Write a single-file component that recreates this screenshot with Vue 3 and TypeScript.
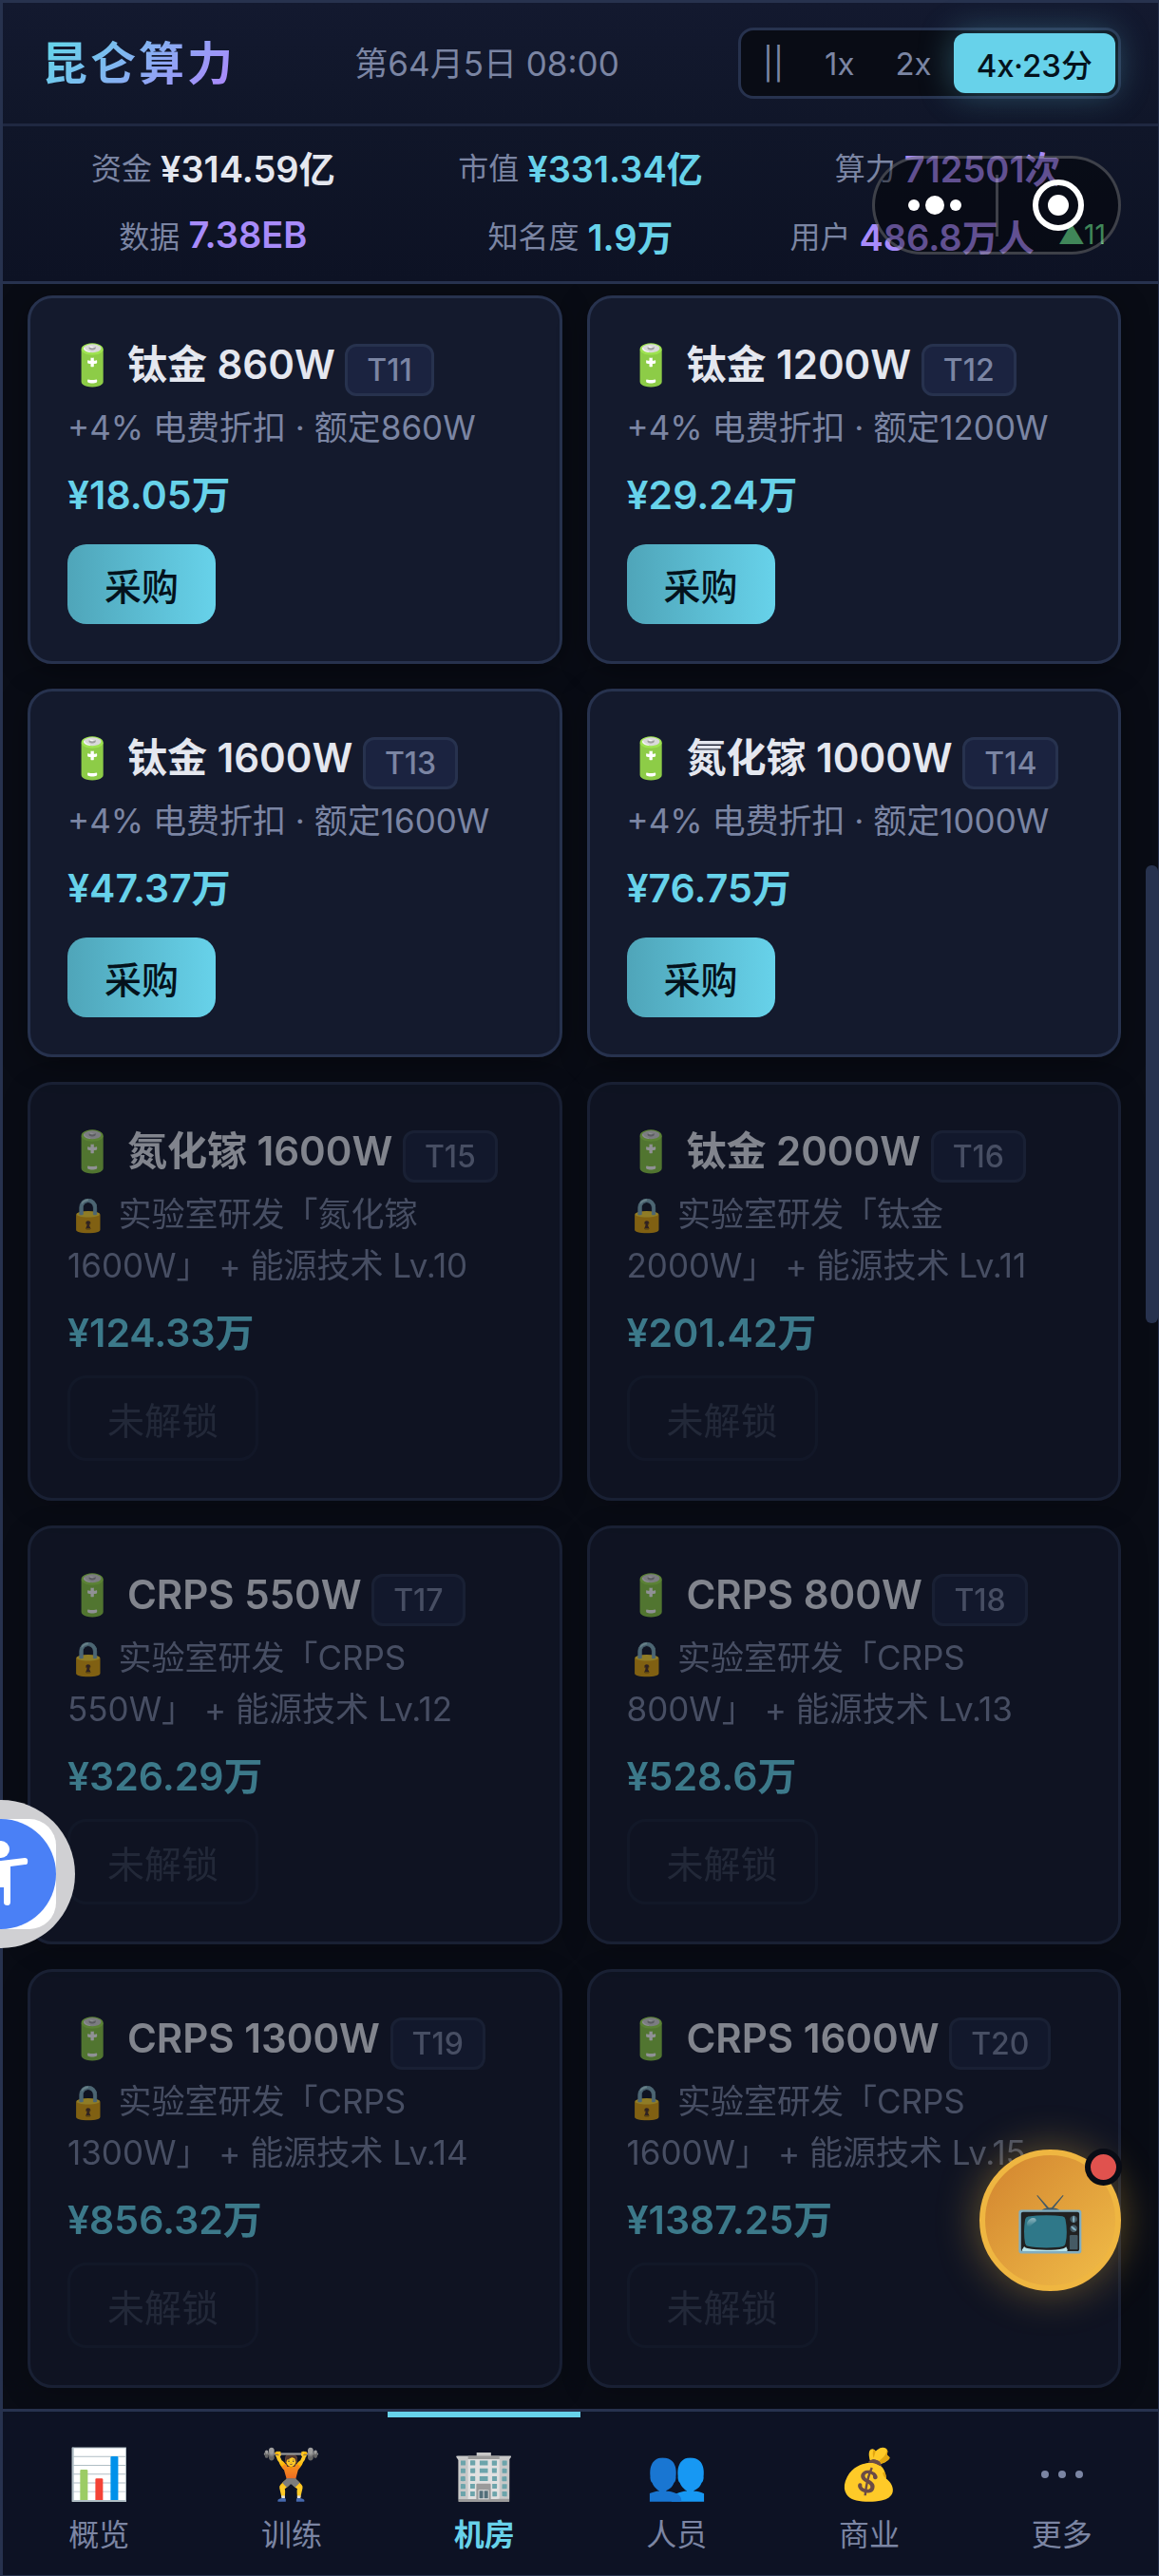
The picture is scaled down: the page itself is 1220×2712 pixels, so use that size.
<script setup lang="ts">
import { ref } from 'vue'

interface Psu {
  name: string
  tier: string
  note: string
  price: string
  locked: boolean
}

interface Stat {
  label: string
  value: string
  tone: 'plain' | 'cyan' | 'violet'
  delta?: string
}

const speeds = ['||', '1x', '2x', '4x·23分']
const speed = ref('4x·23分')

const stats: Stat[] = [
  { label: '资金', value: '¥314.59亿', tone: 'plain' },
  { label: '市值', value: '¥331.34亿', tone: 'cyan' },
  { label: '算力', value: '712501次', tone: 'violet' },
  { label: '数据', value: '7.38EB', tone: 'violet' },
  { label: '知名度', value: '1.9万', tone: 'cyan' },
  { label: '用户', value: '486.8万人', tone: 'violet', delta: '▲11' },
]

const open = (name: string, tier: string, watt: string, price: string): Psu => ({
  name: `${name} ${watt}`,
  tier,
  note: `+4% 电费折扣 · 额定${watt}`,
  price,
  locked: false,
})

const locked = (name: string, tier: string, watt: string, price: string, level: number): Psu => ({
  name: `${name} ${watt}`,
  tier,
  note: `🔒 实验室研发「${name} ${watt}」 + 能源技术 Lv.${level}`,
  price,
  locked: true,
})

const items: Psu[] = [
  open('钛金', 'T11', '860W', '¥18.05万'),
  open('钛金', 'T12', '1200W', '¥29.24万'),
  open('钛金', 'T13', '1600W', '¥47.37万'),
  open('氮化镓', 'T14', '1000W', '¥76.75万'),
  locked('氮化镓', 'T15', '1600W', '¥124.33万', 10),
  locked('钛金', 'T16', '2000W', '¥201.42万', 11),
  locked('CRPS', 'T17', '550W', '¥326.29万', 12),
  locked('CRPS', 'T18', '800W', '¥528.6万', 13),
  locked('CRPS', 'T19', '1300W', '¥856.32万', 14),
  locked('CRPS', 'T20', '1600W', '¥1387.25万', 15),
]

const tabs = [
  { icon: '📊', label: '概览' },
  { icon: '🏋️', label: '训练' },
  { icon: '🏢', label: '机房' },
  { icon: '👥', label: '人员' },
  { icon: '💰', label: '商业' },
  { icon: '', label: '更多' },
]
const tab = ref('机房')
</script>

<template>
  <div class="app">
    <header class="topbar">
      <h1 class="brand">昆仑算力</h1>
      <time class="clock">第64月5日 08:00</time>
      <div class="speeds">
        <button
          v-for="s in speeds"
          :key="s"
          type="button"
          class="speed"
          :class="{ active: s === speed }"
          @click="speed = s"
        >{{ s }}</button>
      </div>
    </header>

    <section class="stats">
      <div v-for="s in stats" :key="s.label" class="stat">
        <span class="stat-label">{{ s.label }}</span>
        <span class="stat-value" :class="s.tone">{{ s.value }}</span>
        <span v-if="s.delta" class="delta">{{ s.delta }}</span>
      </div>
    </section>

    <main class="shop">
      <article v-for="p in items" :key="p.tier" class="card" :class="{ locked: p.locked }">
        <h2 class="name">🔋 {{ p.name }} <span class="tier">{{ p.tier }}</span></h2>
        <p class="note">{{ p.note }}</p>
        <p class="price">{{ p.price }}</p>
        <button type="button" class="buy" :disabled="p.locked">{{ p.locked ? '未解锁' : '采购' }}</button>
      </article>
      <div class="scroll-thumb"></div>
    </main>

    <nav class="tabs">
      <button
        v-for="t in tabs"
        :key="t.label"
        type="button"
        class="tab"
        :class="{ active: t.label === tab }"
        @click="tab = t.label"
      >
        <span v-if="t.icon" class="tab-icon">{{ t.icon }}</span>
        <svg v-else class="more" viewBox="0 0 46 10" aria-hidden="true">
          <circle cx="5" cy="5" r="4" /><circle cx="23" cy="5" r="4" /><circle cx="41" cy="5" r="4" />
        </svg>
        <span class="tab-label">{{ t.label }}</span>
      </button>
    </nav>

    <div class="capsule">
      <button type="button" class="capsule-btn" aria-label="菜单">
        <svg width="58" height="24" viewBox="0 0 58 24">
          <circle cx="7" cy="12" r="6" /><circle cx="29" cy="12" r="10" /><circle cx="51" cy="12" r="6" />
        </svg>
      </button>
      <i class="capsule-line"></i>
      <button type="button" class="capsule-btn" aria-label="关闭">
        <svg width="56" height="56" viewBox="0 0 56 56">
          <circle cx="28" cy="28" r="24" fill="none" stroke="#fff" stroke-width="6" />
          <circle cx="28" cy="28" r="11" />
        </svg>
      </button>
    </div>

    <button type="button" class="assist" aria-label="无障碍">
      <svg viewBox="0 0 80 158" width="80" height="158">
        <circle cx="1" cy="79" r="78" fill="#d0d0d3" />
        <rect x="-60" y="21" width="119" height="116" rx="28" fill="#fff" />
        <circle cx="1" cy="79" r="58" fill="#4a80f6" />
        <circle cx="1" cy="53" r="9" fill="#fff" />
        <path
          d="M-27 63 L1 65 L26 62 Q30 62 29 67 Q29 69 26 69 L11 71 V108 Q11 112 8 112 Q4 112 4 109 V93 H-2 V112 H-9 V71 L-27 69Z"
          fill="#fff"
        />
      </svg>
    </button>

    <button type="button" class="tv" aria-label="观看">
      <span>📺</span>
      <i class="dot"></i>
    </button>
  </div>
</template>

<style>
body {
  margin: 0;
  background: #090c15;
}
</style>

<style scoped>
* {
  box-sizing: border-box;
}

.app {
  position: relative;
  display: flex;
  flex-direction: column;
  height: 100vh;
  border: 3px solid #27324e;
  border-right-width: 1px;
  border-bottom-width: 1px;
  background: #090c15;
  color: #e4e7ef;
  font-family: Inter, "Noto Sans CJK SC", "Noto Color Emoji", sans-serif;
}

button {
  margin: 0;
  padding: 0;
  border: 0;
  background: none;
  color: inherit;
  font: inherit;
}

.topbar {
  display: flex;
  flex: none;
  align-items: center;
  justify-content: space-between;
  height: 130px;
  padding: 0 39px 0 41px;
  border-bottom: 3px solid #1f2841;
  background: linear-gradient(#13192f, #101629);
}

.brand {
  margin: 0;
  background: linear-gradient(135deg, #67d2ea 10%, #a78bfa 90%);
  background-clip: text;
  color: transparent;
  font-size: 48px;
  font-weight: 600;
  line-height: 64px;
  letter-spacing: 3px;
}

.clock {
  color: #7b85a3;
  font-size: 35px;
  line-height: 48px;
}

.speeds {
  display: flex;
  gap: 3px;
  padding: 3px;
  border: 3px solid #27324e;
  border-radius: 16px;
  background: #090c15;
}

.speed {
  height: 63px;
  padding: 0 20px;
  border-radius: 12px;
  color: #7b85a3;
  font-size: 33px;
}

.speed.active {
  padding: 0 24px;
  background: #67d2ea;
  box-shadow: 0 0 36px rgba(103, 210, 234, 0.35);
  color: #04121c;
  font-weight: 500;
}

.stats {
  display: grid;
  flex: none;
  grid-template-columns: repeat(3, 1fr);
  gap: 24px 8px;
  padding: 18px 32px 25px;
  border-bottom: 3px solid #27324e;
  background: linear-gradient(#101629, #0d1224);
}

.stat {
  display: flex;
  align-items: center;
  justify-content: center;
  gap: 9px;
  height: 48px;
  white-space: nowrap;
}

.stat-label {
  color: #7b85a3;
  font-size: 32px;
}

.stat-value {
  font-size: 38px;
  font-weight: 600;
}

.cyan {
  color: #67d2ea;
}

.violet {
  color: #a78bfa;
}

.delta {
  margin-left: 16px;
  color: #6ee79a;
  font-size: 28px;
}

.shop {
  position: relative;
  display: grid;
  flex: 1;
  grid-template-columns: repeat(2, 1fr);
  align-content: start;
  gap: 26px;
  min-height: 0;
  padding: 12px 39px 21px 26px;
  overflow: hidden;
}

.card {
  padding: 39px;
  border: 3px solid #27324e;
  border-radius: 26px;
  background: #141a2d;
  box-shadow: 0 6px 30px rgba(0, 0, 0, 0.35);
}

.card.locked {
  opacity: 0.55;
}

.name {
  height: 62px;
  margin: 0;
  font-size: 42px;
  font-weight: 600;
  line-height: 62px;
  white-space: nowrap;
}

.tier {
  display: inline-block;
  padding: 0 20px;
  border: 3px solid #27324e;
  border-radius: 12px;
  background: #1b2340;
  color: #7b85a3;
  font-size: 32px;
  font-weight: 500;
  line-height: 49px;
  vertical-align: -2px;
}

.note {
  margin: 8px 0 0;
  color: #7b85a3;
  font-size: 35px;
  line-height: 54px;
}

.price {
  margin: 14px 0 0;
  color: #67d2ea;
  font-size: 41px;
  font-weight: 600;
  line-height: 60px;
}

.buy {
  display: block;
  height: 84px;
  margin-top: 22px;
  padding: 0 39px;
  border-radius: 20px;
  background: linear-gradient(90deg, #4fa5b9, #67d2ea);
  color: #04121c;
  font-size: 39px;
  font-weight: 500;
}

.buy:disabled {
  height: 90px;
  margin-top: 15px;
  border: 3px solid #27324e;
  background: none;
  color: #7b85a3;
  font-weight: 400;
  opacity: 0.35;
}

.scroll-thumb {
  position: absolute;
  top: 612px;
  right: 0;
  width: 13px;
  height: 482px;
  border-radius: 6px;
  background: #27324e;
}

.tabs {
  display: grid;
  flex: none;
  grid-template-columns: repeat(6, 1fr);
  height: 175px;
  border-top: 3px solid #27324e;
  background: #0d1224;
}

.tab {
  display: flex;
  flex-direction: column;
  align-items: center;
  padding-top: 28px;
  border-top: 6px solid transparent;
  color: #7b85a3;
}

.tab.active {
  border-top-color: #67d2ea;
  color: #67d2ea;
  font-weight: 600;
}

.tab-icon {
  height: 64px;
  font-size: 52px;
  line-height: 64px;
}

.more {
  width: 46px;
  height: 64px;
  fill: #7b85a3;
}

.tab-label {
  margin-top: 8px;
  font-size: 32px;
  line-height: 48px;
}

.capsule {
  position: absolute;
  top: 161px;
  right: 39px;
  display: flex;
  align-items: center;
  width: 262px;
  height: 104px;
  border: 3px solid rgba(255, 255, 255, 0.22);
  border-radius: 52px;
  background: rgba(0, 0, 0, 0.42);
}

.capsule-btn {
  display: flex;
  flex: 1;
  align-items: center;
  justify-content: center;
}

.capsule-btn svg {
  fill: #fff;
}

.capsule-line {
  width: 3px;
  height: 65px;
  background: rgba(255, 255, 255, 0.22);
}

.assist {
  position: absolute;
  top: 1891px;
  left: -3px;
}

.assist svg {
  display: block;
}

.tv {
  position: absolute;
  right: 39px;
  bottom: 299px;
  display: flex;
  align-items: center;
  justify-content: center;
  width: 149px;
  height: 149px;
  border: 6px solid #efb641;
  border-radius: 50%;
  background: linear-gradient(135deg, #d2842f, #f1bd48);
  box-shadow: 0 0 45px rgba(240, 184, 64, 0.4);
  font-size: 60px;
  line-height: 72px;
}

.dot {
  position: absolute;
  top: -7px;
  right: -7px;
  width: 39px;
  height: 39px;
  border: 6px solid #090c15;
  border-radius: 50%;
  background: #e0524e;
}
</style>
